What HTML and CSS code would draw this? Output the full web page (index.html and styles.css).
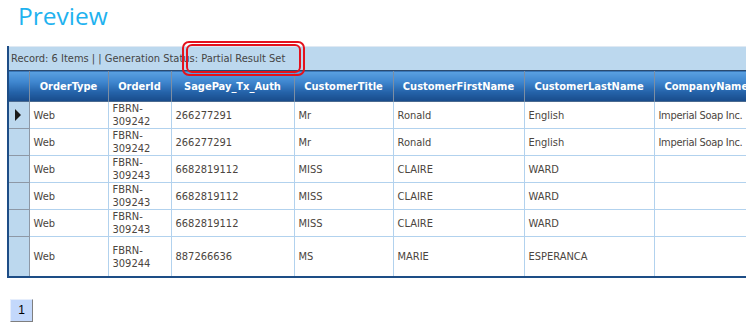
FILE: index.html
```html
<!DOCTYPE html>
<html>
<head>
<meta charset="utf-8">
<link rel="stylesheet" href="styles.css">
</head>
<body>
<div class="page">
  <h1 class="title">Preview</h1>
  <div class="grid">
    <div class="status">Record: 6 Items | | Generation Status: Partial Result Set</div>
    <table class="data">
      <colgroup>
        <col class="c-sel"><col class="c-type"><col class="c-id"><col class="c-auth"><col class="c-title"><col class="c-first"><col class="c-last"><col class="c-comp">
      </colgroup>
      <thead>
        <tr>
          <th class="sel"></th><th>OrderType</th><th>OrderId</th><th>SagePay_Tx_Auth</th><th>CustomerTitle</th><th>CustomerFirstName</th><th>CustomerLastName</th><th class="comp-h">CompanyName</th>
        </tr>
      </thead>
      <tbody>
        <tr><td class="sel"><span class="arrow"></span></td><td>Web</td><td>FBRN-309242</td><td>266277291</td><td>Mr</td><td>Ronald</td><td>English</td><td class="comp">Imperial Soap Inc.</td></tr>
        <tr><td class="sel"></td><td>Web</td><td>FBRN-309242</td><td>266277291</td><td>Mr</td><td>Ronald</td><td>English</td><td class="comp">Imperial Soap Inc.</td></tr>
        <tr><td class="sel"></td><td>Web</td><td>FBRN-309243</td><td>6682819112</td><td>MISS</td><td>CLAIRE</td><td>WARD</td><td class="comp"></td></tr>
        <tr><td class="sel"></td><td>Web</td><td>FBRN-309243</td><td>6682819112</td><td>MISS</td><td>CLAIRE</td><td>WARD</td><td class="comp"></td></tr>
        <tr><td class="sel"></td><td>Web</td><td>FBRN-309243</td><td>6682819112</td><td>MISS</td><td>CLAIRE</td><td>WARD</td><td class="comp"></td></tr>
        <tr class="tall"><td class="sel"></td><td>Web</td><td>FBRN-309244</td><td>887266636</td><td>MS</td><td>MARIE</td><td>ESPERANCA</td><td class="comp"></td></tr>
      </tbody>
    </table>
  </div>
  <div class="pager"><span class="page-btn">1</span></div>
  <div class="mark mark-outer"></div>
  <div class="mark mark-inner"></div>
</div>
</body>
</html>
```
FILE: styles.css
```css
html, body {
  margin: 0;
  padding: 0;
  background: #ffffff;
}
.page {
  position: relative;
  width: 756px;
  height: 329px;
  overflow: hidden;
}
.title {
  margin: 0;
  padding-left: 18px;
  font-family: "Open Sans", "Noto Sans", sans-serif;
  font-weight: 400;
  font-size: 24.5px;
  line-height: 32px;
  color: #1fb2ef;
}
.grid {
  margin-top: 14px;
  margin-left: 7px;
  width: 737px;
  overflow: hidden;
  border-left: 2px solid #1d4d86;
  border-bottom: 2px solid #1d4d86;
  font-family: "DejaVu Sans Condensed", "DejaVu Sans", sans-serif;
  font-size: 11px;
}
.status {
  height: 23px;
  line-height: 23px;
  background: #bcd8ee;
  border-top: 1px solid #dfe9f3;
  padding-left: 2px;
  color: #454545;
  white-space: nowrap;
}
.data {
  border-collapse: collapse;
  table-layout: fixed;
  width: 860px;
}
.c-sel { width: 20px; }
.c-type { width: 79px; }
.c-id { width: 63px; }
.c-auth { width: 123px; }
.c-title { width: 99px; }
.c-first { width: 131px; }
.c-last { width: 130px; }
.c-comp { width: 215px; }
.data th {
  height: 30px;
  padding: 0 4px;
  background: linear-gradient(#5ba1e2 0%, #3f86cf 35%, #2462a8 70%, #184b8a 100%);
  color: #ffffff;
  font-weight: bold;
  font-size: 11px;
  text-align: center;
  border-top: 1px solid #2b4a70;
  border-left: 1px solid #7d8ea3;
  white-space: nowrap;
  overflow: hidden;
}
.data th:first-child { border-left: none; }
.data th.comp-h {
  text-align: left;
  padding-left: 10px;
}
.data td {
  height: 26px;
  padding: 0 4px;
  border: 1px solid #b2d2ee;
  color: #4b4540;
  vertical-align: middle;
  line-height: 13px;
  overflow: hidden;
  white-space: normal;
}
.data td.comp {
  letter-spacing: -0.3px;
  white-space: nowrap;
}
.data tbody tr:first-child td { border-top: 1px solid #4a6a90; }
.data tr.tall td { height: 39px; border-bottom: none; }
.data td.sel {
  padding: 0;
  background: #bcd8ee;
  border: none;
  border-bottom: 1px solid #8d98a6;
  border-right: 1px solid #8d98a6;
}
.data tr.tall td.sel { border-bottom: none; }
.arrow {
  display: block;
  width: 0;
  height: 0;
  margin-left: 6px;
  border-top: 6px solid transparent;
  border-bottom: 6px solid transparent;
  border-left: 6px solid #1a1a1a;
}
.pager {
  margin-top: 21px;
  margin-left: 10px;
}
.page-btn {
  display: inline-block;
  width: 21px;
  height: 21px;
  line-height: 21px;
  text-align: center;
  background: #c3d8fb;
  border-top: 1px solid #e6eefc;
  border-left: 1px solid #e6eefc;
  border-right: 1px solid #7f7f7f;
  border-bottom: 1px solid #7f7f7f;
  font-family: "Liberation Sans", Arial, sans-serif;
  font-size: 12px;
  color: #000000;
}
.mark {
  position: absolute;
  border: 2px solid #e4121d;
  box-sizing: border-box;
}
.mark-outer {
  left: 182px;
  top: 41px;
  width: 123px;
  height: 35px;
  border-radius: 7px;
}
.mark-inner {
  left: 186px;
  top: 44px;
  width: 115px;
  height: 29px;
  border-radius: 6px;
}
```
